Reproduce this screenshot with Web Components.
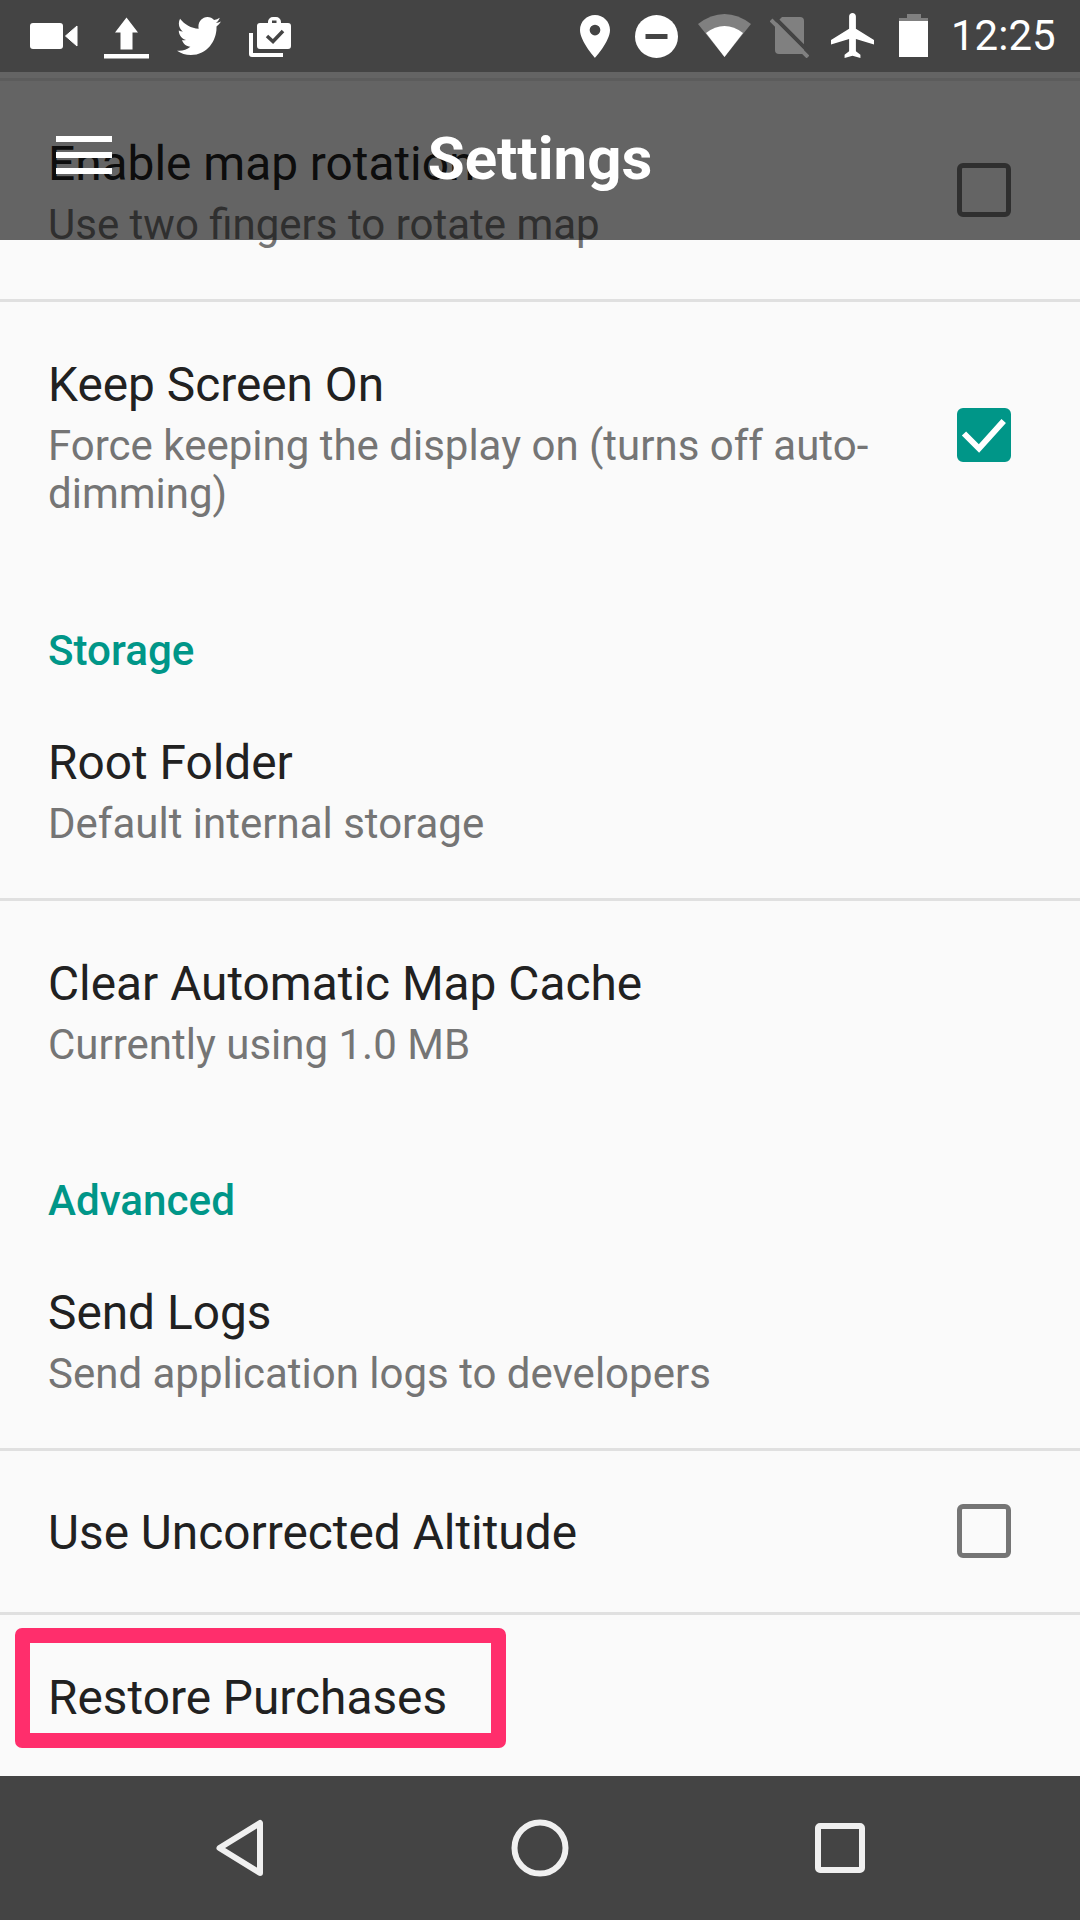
<!DOCTYPE html>
<html><head><meta charset="utf-8"><style>
html,body{margin:0;padding:0;background:#fafafa;font-family:Roboto,sans-serif}
</style></head><body>
<template id="t-status"><style>
:host{display:flex;align-items:center;height:72px;background:#444;color:#fff;flex:none;position:relative;z-index:3}
svg{display:block;flex:none;position:relative}
.l{display:flex;padding-left:30px;gap:0;height:72px;align-items:flex-start}
.sp{flex:1}
.r{display:flex;height:72px;align-items:flex-start}
.t{font-size:42px;line-height:74px;margin-left:23px;width:129px}
</style>
<div class="l">
<svg style="margin-top:23px" width="48" height="26" viewBox="30 23 48 26"><rect x="30" y="23" width="33" height="26" rx="3" fill="#fff"/><path d="M65.500 36L77 26v20z" fill="#fff" stroke="#fff" stroke-width="1" stroke-linejoin="round"/></svg>
<svg style="margin-top:17px;margin-left:26px" width="46" height="42" viewBox="104 17 46 42"><path d="M126.500 17.500L138 32.500h-5.500V49.500h-12V32.500H115zM104 54h45v4.500h-45z" fill="#fff"/></svg>
<svg style="margin-top:17px;margin-left:27px" width="44" height="38" viewBox="1.54 4 20.92 17" preserveAspectRatio="none"><path fill="#fff" d="M22.46,6C21.69,6.35 20.86,6.58 20,6.69C20.88,6.16 21.56,5.32 21.88,4.31C21.05,4.81 20.13,5.16 19.16,5.36C18.37,4.5 17.26,4 16,4C13.65,4 11.73,5.92 11.73,8.29C11.73,8.63 11.77,8.96 11.84,9.27C8.28,9.09 5.11,7.38 3,4.79C2.63,5.42 2.42,6.16 2.42,6.94C2.42,8.43 3.17,9.75 4.33,10.5C3.62,10.5 2.96,10.3 2.38,10C2.38,10 2.38,10 2.38,10.03C2.38,12.11 3.86,13.85 5.82,14.24C5.46,14.34 5.08,14.39 4.69,14.39C4.42,14.39 4.15,14.36 3.89,14.31C4.43,16 6,17.26 7.89,17.29C6.43,18.45 4.58,19.13 2.56,19.13C2.22,19.13 1.88,19.11 1.54,19.07C3.44,20.29 5.7,21 8.12,21C16,21 20.33,14.46 20.33,8.79C20.33,8.6 20.33,8.42 20.32,8.23C21.16,7.63 21.88,6.87 22.46,6Z"/></svg>
<svg style="margin-top:17px;margin-left:28px" width="43" height="41" viewBox="249 17 43 41"><path fill="#fff" d="M249 33h4v20h30v4h-31a3 3 0 0 1-3-3zM261 23h7v-1a5 5 0 0 1 5-5h3a5 5 0 0 1 5 5v1h7a3 3 0 0 1 3 3v20a3 3 0 0 1-3 3H260a3 3 0 0 1-3-3V26a3 3 0 0 1 3-3z"/><rect x="272" y="20.500" width="4.500" height="2.500" fill="#444"/><path d="M267 36l6 5.500 10-10.500" fill="none" stroke="#444" stroke-width="3.500"/></svg>
</div>
<div class="sp"></div>
<div class="r">
<svg style="margin-top:15px" width="30" height="43" viewBox="5 2 14 20"><path fill="#fff" d="M12 2C8.130 2 5 5.130 5 9c0 5.250 7 13 7 13s7-7.750 7-13c0-3.870-3.130-7-7-7zm0 9.500a2.500 2.500 0 0 1 0-5 2.500 2.500 0 0 1 0 5z"/></svg>
<svg style="margin-top:15px;margin-left:25px" width="43" height="43" viewBox="0 0 43 43"><circle cx="21.500" cy="21.500" r="21.500" fill="#fff"/><rect x="10.500" y="19" width="22" height="5" fill="#444"/></svg>
<svg style="margin-top:14px;margin-left:20px" width="53" height="43" viewBox="698 14 53 43"><path fill="#808080" d="M724.500 57L698 24Q711 14 724.500 14T751 24z"/><path fill="#fff" d="M724.500 57L706 33Q715 26 724.500 26T743 33z"/></svg>
<svg style="margin-top:15px;margin-left:19px" width="39" height="43" viewBox="770 15 39 43"><path fill="#808080" d="M782 17h18a4 4 0 0 1 4 4v33h-25a4 4 0 0 1-4-4V24z"/><path d="M773 16l38 38" stroke="#444" stroke-width="4"/><path d="M771 20l37 37" stroke="#808080" stroke-width="4"/></svg>
<svg style="margin-top:13px;margin-left:22px" width="43" height="45" viewBox="2 2 19 20" preserveAspectRatio="none"><path fill="#fff" d="M21 16v-2l-8-5V3.500c0-.830-.670-1.500-1.500-1.500S10 2.670 10 3.500V9l-8 5v2l8-2.500V19l-2 1.500V22l3.500-1 3.500 1v-1.500L13 19v-5.500l8 2.500z"/></svg>
<svg style="margin-top:14px;margin-left:25px" width="29" height="43" viewBox="0 0 29 43"><path fill="#808080" d="M8 0h14v4h7v4H0V4h8z"/><rect y="7" width="29" height="36" fill="#fff"/></svg>
</div>
<div class="t">12:25</div>
</template>

<template id="t-appbar"><style>
:host{position:absolute;left:0;right:0;top:72px;height:168px;background:rgba(0,0,0,.6);color:#fff;z-index:2;display:block}
.line{height:3px;margin-top:6px;background:rgba(0,0,0,.08)}
.menu{position:absolute;left:56px;top:64px;width:56px;height:38px;display:flex;flex-direction:column;justify-content:space-between}
.menu i{display:block;height:6px;background:#fff}
h1{margin:0;position:absolute;left:0;right:0;top:53px;text-align:center;font:700 60px/68px Roboto,sans-serif}
</style>
<div class="line"></div>
<div class="menu"><i></i><i></i><i></i></div>
<h1><slot></slot></h1>
</template>

<template id="t-pref"><style>
:host{display:flex;align-items:flex-start;padding:var(--pt,50px) 69px var(--pb,50px) 48px;position:relative;color:#212121}
:host([divider]){border-bottom:3px solid #e0e0e0}
.x{flex:1;min-width:0}
.a{font-size:47.800px;line-height:62px;white-space:nowrap}
.b{font-size:42px;line-height:48px;color:#757575;margin-top:6px}
:host([single]) .b{display:none}
.c{flex:none;width:54px;height:54px;box-sizing:border-box;border:5px solid #757575;border-radius:6px;margin-left:60px;margin-top:var(--ct,0px);position:relative}
:host([checked]) .c{background:#009688;border-color:#009688}
svg{display:none;position:absolute;left:-5px;top:-5px}
:host([checked]) svg{display:block}
</style>
<div class="x"><div class="a"><slot name="title"></slot></div><div class="b" part="sub"><slot name="sub"></slot></div></div>
<div class="c"><svg width="54" height="54" viewBox="0 0 54 54"><path d="M7 25.500l15 15L46.700 13" fill="none" stroke="#fff" stroke-width="6"/></svg></div>
</template>

<template id="t-plain"><style>
:host{display:block;padding:var(--pt,50px) 56px var(--pb,50px) 48px;position:relative;color:#212121}
:host([divider]){border-bottom:3px solid #e0e0e0}
.a{font-size:47.800px;line-height:62px;white-space:nowrap}
.b{font-size:42px;line-height:48px;color:#757575;margin-top:6px}
</style>
<div class="a"><slot name="title"></slot></div><div class="b"><slot name="sub"></slot></div>
</template>

<template id="t-head"><style>
:host{display:block;padding:var(--pt,0) 48px var(--pb,0);font-size:42.200px;line-height:48px;font-weight:500;color:#009688}
</style><slot></slot></template>

<template id="t-mark"><style>
:host{position:absolute;left:15px;top:13px;width:491px;height:120px;box-sizing:border-box;border:15px solid #ff2e6c;border-radius:7px;display:block}
</style></template>

<template id="t-nav"><style>
:host{display:block;height:144px;background:#444;flex:none}
.n{display:flex;height:100%;justify-content:center}
svg{display:block}
</style>
<div class="n"><svg width="1080" height="144" viewBox="0 1776 1080 144">
<path d="M260 1823v50L219.500 1848z" fill="none" stroke="#f0f0f0" stroke-width="6" stroke-linejoin="round"/>
<circle cx="540" cy="1848" r="25.500" fill="none" stroke="#f0f0f0" stroke-width="6"/>
<rect x="818" y="1826" width="44" height="44" rx="2" fill="none" stroke="#f0f0f0" stroke-width="6"/>
</svg></div></template>

<template id="t-screen"><style>
:host{display:flex;flex-direction:column;width:1080px;height:1920px;position:relative;overflow:hidden;background:#fafafa}
.list{flex:1;min-height:0;overflow:hidden;display:block}
</style><slot name="status"></slot><slot name="bar"></slot><div class="list"><slot></slot></div><slot name="nav"></slot></template>

<x-screen>
<x-status slot="status"></x-status>
<x-appbar slot="bar">Settings</x-appbar>
<x-pref divider style="--pt:61px;--pb:50px;--ct:30px"><span slot="title">Enable map rotation</span><span slot="sub">Use two fingers to rotate map</span></x-pref>
<x-pref checked style="--pt:52px;--pb:0px;--ct:54px"><span slot="title">Keep Screen On</span><span slot="sub">Force keeping the display on (turns off auto-dimming)</span></x-pref>
<x-head style="--pt:109px;--pb:0px">Storage</x-head>
<x-plain divider style="--pt:57px;--pb:50px"><span slot="title">Root Folder</span><span slot="sub">Default internal storage</span></x-plain>
<x-plain style="--pt:52px;--pb:0px"><span slot="title">Clear Automatic Map Cache</span><span slot="sub">Currently using 1.0 MB</span></x-plain>
<x-head style="--pt:108px;--pb:0px">Advanced</x-head>
<x-plain divider style="--pt:57px;--pb:50px"><span slot="title">Send Logs</span><span slot="sub">Send application logs to developers</span></x-plain>
<x-pref divider single style="--pt:51px;--pb:48px;--ct:2px"><span slot="title">Use Uncorrected Altitude</span></x-pref>
<div style="position:relative;padding:52px 48px 0;font:47.800px/62px Roboto,sans-serif;color:#212121">Restore Purchases<x-mark></x-mark></div>
<x-nav slot="nav"></x-nav>
</x-screen>
<script>
for (const n of ['status','appbar','pref','plain','head','mark','nav','screen']) {
  customElements.define('x-'+n, class extends HTMLElement {
    constructor(){super();this.attachShadow({mode:'open'}).appendChild(document.getElementById('t-'+n).content.cloneNode(true));}
  });
}
</script>
</body></html>
